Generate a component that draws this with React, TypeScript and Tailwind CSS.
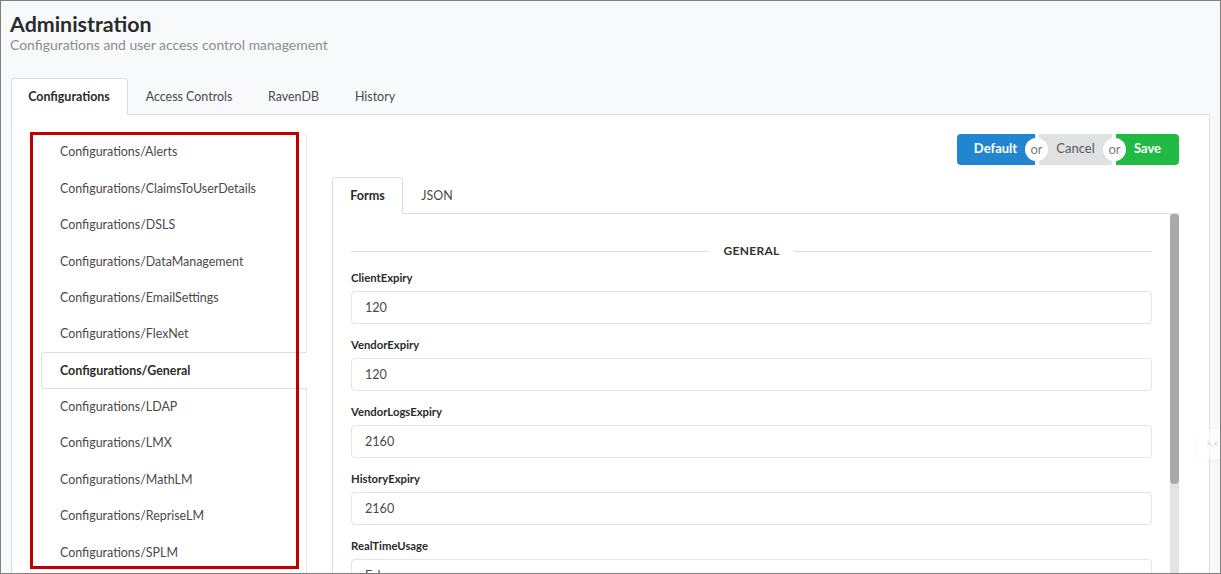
const menuItems = [
  "Configurations/Alerts",
  "Configurations/ClaimsToUserDetails",
  "Configurations/DSLS",
  "Configurations/DataManagement",
  "Configurations/EmailSettings",
  "Configurations/FlexNet",
  "Configurations/General",
  "Configurations/LDAP",
  "Configurations/LMX",
  "Configurations/MathLM",
  "Configurations/RepriseLM",
  "Configurations/SPLM",
];

const fields = [
  { label: "ClientExpiry", value: "120" },
  { label: "VendorExpiry", value: "120" },
  { label: "VendorLogsExpiry", value: "2160" },
  { label: "HistoryExpiry", value: "2160" },
  { label: "RealTimeUsage", value: "False" },
];

function OrBadge({ className }: { className: string }) {
  return (
    <span
      className={
        "absolute top-[4px] z-10 flex h-[23px] w-[23px] items-center justify-center rounded-full bg-white text-[13px] font-normal text-[#7d7d7f] " +
        className
      }
    >
      or
    </span>
  );
}

export default function App() {
  return (
    <div className="relative h-[574px] w-[1221px] overflow-hidden border border-[#7f7f7f] bg-[#f8f9fb] font-['Lato',sans-serif] text-[12.45px] text-[#4a4a4a]">
      <div className="pl-[9px] pt-[9px]">
        <h1 className="text-[21.4px] font-bold leading-[28px] text-[#2b2b2b]">Administration</h1>
        <p className="-mt-[2px] text-[13.95px] leading-[17px] text-[#8b8e92]">Configurations and user access control management</p>
      </div>

      <div className="ml-[10px] mr-[10px] mt-[25px]">
        <div className="relative z-10 flex h-[37px] items-stretch">
          <div className="flex h-[37px] w-[117px] items-center justify-center rounded-t-[4px] border border-b-0 border-[#dededf] bg-white pr-[1px] pt-[1px] font-bold text-[#2b2b2b]">
            Configurations
          </div>
          <div className="flex w-[122px] items-center justify-center pt-[2px]">Access Controls</div>
          <div className="flex w-[87px] items-center justify-center pt-[2px]">RavenDB</div>
          <div className="flex w-[76px] items-center justify-center pt-[2px]">History</div>
        </div>

        <div className="-mt-px flex h-[470px] border border-[#dededf] bg-white">
          <div className="w-[295px] shrink-0 pl-[29px] pt-[19px]">
            <ul className="h-[440px] border-r border-[#e6e6e7]">
              {menuItems.map((item) =>
                item === "Configurations/General" ? (
                  <li
                    key={item}
                    className="-mr-px flex h-[36.4px] items-center rounded-l-[4px] border border-r-0 border-[#dededf] bg-white pl-[18px] pt-[1px] font-bold text-[#2b2b2b]"
                  >
                    {item}
                  </li>
                ) : (
                  <li key={item} className="flex h-[36.4px] items-center pl-[19px] pt-[1px]">
                    {item}
                  </li>
                ),
              )}
            </ul>
          </div>

          <div className="min-w-0 flex-1 pl-[25px] pr-[30px] pt-[19px]">
            <div className="flex justify-end">
              <div className="flex h-[31px] text-[13px] font-bold">
                <div className="relative flex w-[78px] items-center justify-center rounded-l-[4px] bg-[#2185d0] pb-[1px] pr-[1px] text-white">
                  Default
                  <OrBadge className="right-[-13px]" />
                </div>
                <div className="relative ml-[4px] flex w-[73px] items-center justify-center bg-[#e0e1e2] pb-[1px] font-normal text-[#5a5a5a]">
                  Cancel
                  <OrBadge className="right-[-14px]" />
                </div>
                <div className="ml-[4px] flex w-[63px] items-center justify-center rounded-r-[4px] bg-[#21ba45] pb-[1px] text-white">
                  Save
                </div>
              </div>
            </div>

            <div className="relative z-10 mt-[12px] flex h-[37px]">
              <div className="flex w-[71px] items-center justify-center rounded-t-[4px] border border-b-0 border-[#dededf] bg-white text-[12.6px] font-bold text-[#2b2b2b]">
                Forms
              </div>
              <div className="flex w-[68px] items-center justify-center pt-[2px] text-[12.4px]">JSON</div>
            </div>

            <div className="-mt-px flex h-[400px] border-l border-t border-[#dededf]">
              <div className="min-w-0 flex-1 overflow-hidden pl-[18px] pr-[18px]">
                <div className="mt-[27px] flex items-center gap-[14px] text-[12px] font-bold tracking-[0.3px] text-[#333]">
                  <div className="h-px flex-1 bg-[#dededf]"></div>
                  <span className="leading-[20px]">GENERAL</span>
                  <div className="h-px flex-1 bg-[#dededf]"></div>
                </div>
                <div className="mt-[7px]">
                  {fields.map((field) => (
                    <div key={field.label} className="mb-[11px] h-[56px]">
                      <label className="block h-[23px] text-[11.3px] font-bold leading-[20px] text-[#2b2b2b]">
                        {field.label}
                      </label>
                      <div className="flex h-[33px] items-center rounded-[4px] border border-[#e5e5e6] bg-white pl-[13px] pt-[2px] text-[12.6px] text-[#4a4a4a]">
                        {field.value}
                      </div>
                    </div>
                  ))}
                </div>
              </div>
              <div className="w-[9px] shrink-0 bg-[#e3e3e3]">
                <div className="h-[270px] rounded-b-[4px] rounded-t-[4px] bg-[#a9a9a9]"></div>
              </div>
            </div>
          </div>
        </div>
      </div>

      {/* red annotation box drawn over the menu */}
      <div className="pointer-events-none absolute left-[29px] top-[131px] z-20 h-[437px] w-[269px] border-[3px] border-[#c00000]"></div>

      {/* faded widget peeking in at the right edge */}
      <div className="absolute left-[1195px] top-[428px] z-10 flex h-[30px] w-[40px] items-center rounded-l-[6px] bg-white/60 pl-[10px] text-[9px] text-[#c8c8cc] shadow-[0_2px_10px_rgba(0,0,0,0.03)]">
        &gt;.&lt;
      </div>
    </div>
  );
}
